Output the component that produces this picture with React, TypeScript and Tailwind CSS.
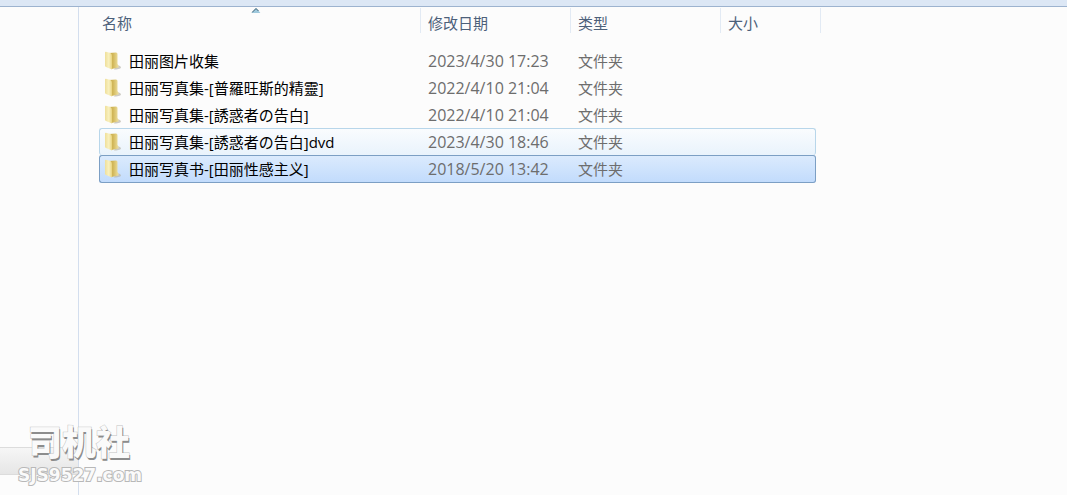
import clsx from "clsx";

type Entry = {
  name: string;
  modified: string;
  kind: string;
  state?: "hover" | "selected";
};

const entries: Entry[] = [
  { name: "田丽图片收集", modified: "2023/4/30 17:23", kind: "文件夹" },
  { name: "田丽写真集-[普羅旺斯的精靈]", modified: "2022/4/10 21:04", kind: "文件夹" },
  { name: "田丽写真集-[誘惑者の告白]", modified: "2022/4/10 21:04", kind: "文件夹" },
  { name: "田丽写真集-[誘惑者の告白]dvd", modified: "2023/4/30 18:46", kind: "文件夹", state: "hover" },
  { name: "田丽写真书-[田丽性感主义]", modified: "2018/5/20 13:42", kind: "文件夹", state: "selected" },
];

function FolderIcon() {
  return (
    <svg width="20" height="20" viewBox="0 0 20 20" className="shrink-0" aria-hidden="true">
      <defs>
        <linearGradient id="flap" x1="0" y1="0" x2="1" y2="0">
          <stop offset="0" stopColor="#efdf9a" />
          <stop offset="0.55" stopColor="#f9f1c0" />
          <stop offset="1" stopColor="#e8d37c" />
        </linearGradient>
        <linearGradient id="body" x1="0" y1="0" x2="1" y2="0">
          <stop offset="0" stopColor="#c4a648" />
          <stop offset="0.45" stopColor="#d3b95c" />
          <stop offset="1" stopColor="#eee0a0" />
        </linearGradient>
      </defs>
      <path d="M13 14.500C15 13.500 18 15 18 16.500C17.500 18 14 18.500 11 18.500z" fill="#b5b1a6" opacity="0.65" />
      <path d="M6 2L13 1.500Q14.500 1.500 14.500 3V13L15.500 14.500V16.500L8.500 18z" fill="url(#body)" />
      <path d="M2 1.500Q2 0.500 3 0.700L7.500 2Q9 3 9 5V18.500L3 16Q2 15.500 2 14.500z" fill="url(#flap)" />
    </svg>
  );
}

function SortArrow() {
  return (
    <svg width="9" height="5" viewBox="0 0 9 5" className="absolute top-0 left-[49%] -translate-x-1/2" aria-hidden="true">
      <path d="M0 5L4.500 0L9 5z" fill="#9fc9dd" />
      <path d="M0.500 4.500L4.500 0.500L7 3" fill="none" stroke="#3c5e72" />
    </svg>
  );
}

function EntryRow({ entry }: { entry: Entry }) {
  const hover = entry.state === "hover";
  const selected = entry.state === "selected";
  const cell = clsx(
    "p-0",
    !entry.state && "border-transparent",
    hover && "border-t border-[#b8d6ea]",
    selected && "border-y border-[#7c9fc4]"
  );

  return (
    <tr
      aria-selected={selected}
      className={clsx(
        selected ? "h-7" : "h-[27px]",
        hover && "bg-linear-to-b from-[#fafcfe] to-[#e9f3fc]",
        selected && "bg-linear-to-b from-[#dcebfd] to-[#c1dbfc]"
      )}
    >
      <td className={clsx(cell, "rounded-l-[3px] border-l")}>
        <div className="flex items-center gap-1.5 pl-[3px] text-black">
          <FolderIcon />
          <span className="truncate">{entry.name}</span>
        </div>
      </td>
      <td className={clsx(cell, "pl-[7px] text-base leading-5")}>{entry.modified}</td>
      <td className={clsx(cell, "pl-[7px]")}>{entry.kind}</td>
      <td className={clsx(cell, "rounded-r-[3px] border-r")} />
    </tr>
  );
}

function FileTable() {
  const head = "border-r border-[#e2eaf4] p-0 pt-[5px] pl-[7px] text-left font-normal";

  return (
    <table className="table-fixed border-separate border-spacing-0 text-[15px] leading-5 text-[#6d6d6d]">
      <colgroup>
        <col className="w-[322px]" />
        <col className="w-[150px]" />
        <col className="w-[150px]" />
        <col className="w-[95px]" />
        <col className="w-[5px]" />
      </colgroup>
      <thead className="text-[#4c607a]">
        <tr>
          <th scope="col" className="relative border-r border-[#e2eaf4] p-0 pt-[5px] pl-[3px] text-left font-normal">
            <SortArrow />
            名称
          </th>
          <th scope="col" className={head}>修改日期</th>
          <th scope="col" className={head}>类型</th>
          <th scope="col" colSpan={2} className={head}>大小</th>
        </tr>
        <tr className="h-3.5" />
      </thead>
      <tbody>
        {entries.map((entry) => (
          <EntryRow key={entry.name} entry={entry} />
        ))}
      </tbody>
    </table>
  );
}

function Watermark() {
  return (
    <div className="absolute bottom-2.5 left-[18px] font-bold text-[#fafafa] [paint-order:stroke_fill]">
      <p className="pl-2.5 font-['Noto_Sans_CJK_SC',sans-serif] text-[34px] leading-12 font-black [-webkit-text-stroke:1px_#c4c4c4] [text-shadow:1px_2px_0_#8c8c8c]">
        司机社
      </p>
      <p className="font-['DejaVu_Sans',sans-serif] text-[17px] leading-5 [-webkit-text-stroke:2px_#b8b8b8]">
        SJS9527.com
      </p>
    </div>
  );
}

export default function App() {
  return (
    <div className="relative flex min-h-screen flex-col overflow-hidden bg-[#fcfcfc] font-['Open_Sans','Noto_Sans_CJK_SC',sans-serif]">
      <div className="h-[7px] border-b border-[#9db3cf] bg-[#dce7f5]" />
      <div className="flex flex-1">
        <aside className="flex w-[79px] shrink-0 flex-col justify-end border-r border-[#d3deee] pb-5">
          <div className="h-7 border-y border-[#dcdcdc] bg-linear-to-b from-[#f6f6f6] to-[#e6e6e6]" />
        </aside>
        <main className="min-w-0 flex-1 overflow-x-auto pt-px pl-5">
          <FileTable />
        </main>
      </div>
      <Watermark />
    </div>
  );
}
